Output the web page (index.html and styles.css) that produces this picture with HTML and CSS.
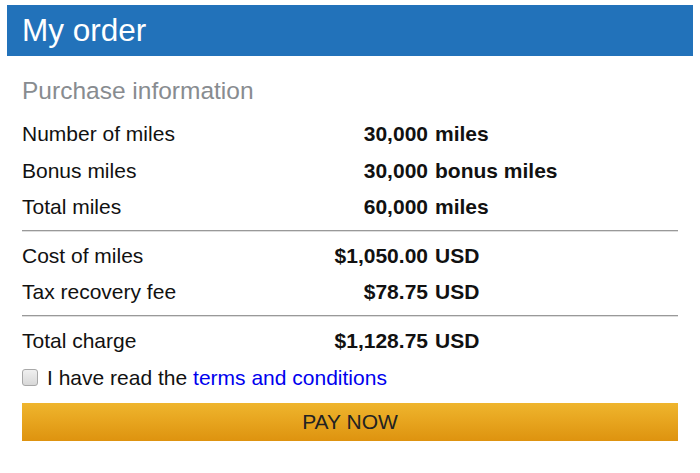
FILE: index.html
```html
<!DOCTYPE html>
<html lang="en">
<head>
  <meta charset="UTF-8" />
  <title>My order</title>
  <link rel="stylesheet" href="styles.css">
</head>
<body>
  <div class="card">
    <div class="card-header">My order</div>
    <div class="card-body">
      <h3 class="section-title">Purchase information</h3>

      <div class="rows">
        <div class="label">Number of miles</div><div class="num">30,000</div><div class="unit">miles</div>
        <div class="label">Bonus miles</div><div class="num">30,000</div><div class="unit">bonus miles</div>
        <div class="label">Total miles</div><div class="num">60,000</div><div class="unit">miles</div>
      </div>
      <hr class="sep">
      <div class="rows">
        <div class="label">Cost of miles</div><div class="num">$1,050.00</div><div class="unit">USD</div>
        <div class="label">Tax recovery fee</div><div class="num">$78.75</div><div class="unit">USD</div>
      </div>
      <hr class="sep">
      <div class="rows">
        <div class="label">Total charge</div><div class="num">$1,128.75</div><div class="unit">USD</div>
      </div>

      <label class="terms">
        <input type="checkbox" class="check">
        I have read the <a href="#">terms and conditions</a>
      </label>

      <button class="pay-btn">PAY NOW</button>
    </div>
  </div>
</body>
</html>
```

FILE: styles.css
```css
body { margin: 5px 7px; background: #fff; font-family: Arial, "Liberation Sans", sans-serif; color: #111; }
.card { background: #fff; box-shadow: 1px 1px 5px rgba(0, 0, 0, 0.45); }
.card-header { background: #2272ba; color: #fff; font-size: 31.5px; height: 51px; line-height: 51px; padding: 0 15px; }
.card-body { padding: 21px 15px 23px; }
.section-title { margin: 0 0 11px; font-size: 24.5px; line-height: 28px; font-weight: normal; color: #888c90; }
.rows { display: grid; grid-template-columns: 306px 100px 1fr; font-size: 21px; line-height: 36.5px; }
.num { text-align: right; font-weight: bold; white-space: nowrap; }
.unit { padding-left: 7px; font-weight: bold; white-space: nowrap; }
.sep { border: 0; border-top: 1px solid #999; border-bottom: 1px solid #dedede; margin: 4px 0 6px; }
.terms { display: flex; align-items: center; height: 37px; font-size: 21px; }
.terms a { color: #0000ee; text-decoration: none; margin-left: 6px; }
.check { appearance: none; width: 16px; height: 17px; margin: 0 9px 0 0; border: 1px solid #a8a8a8; border-radius: 3px; background: linear-gradient(#f0f0f0, #d8d8d8); }
.pay-btn { display: block; width: 100%; height: 38px; margin-top: 7px; border: none; background: linear-gradient(#efb52d, #de930f); color: #222; font-family: inherit; font-size: 21px; }
```
